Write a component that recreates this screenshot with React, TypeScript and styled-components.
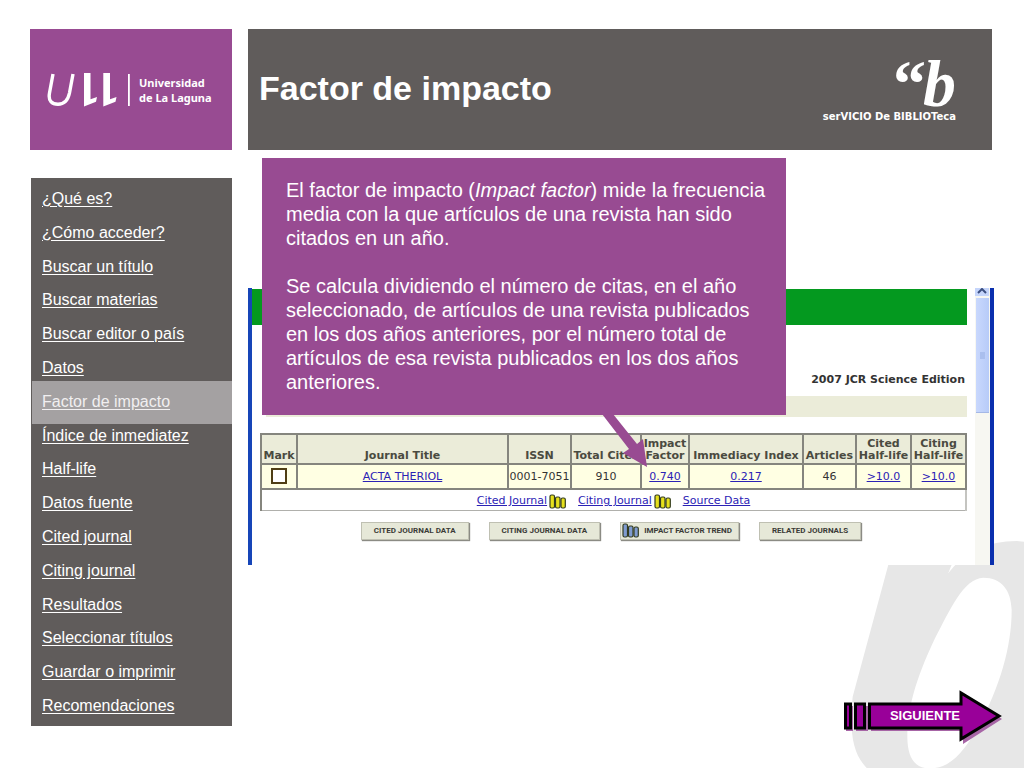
import React from "react";
import styled, { createGlobalStyle } from "styled-components";

const GlobalStyle = createGlobalStyle`
  * { box-sizing: border-box; }
  body { margin: 0; background: #fff; font-family: "Liberation Sans", Arial, sans-serif; }
`;

const purple = "#984b92";
const gray = "#605c5b";
const verdana = `"DejaVu Sans", Verdana, sans-serif`;

const Page = styled.div`
  position: relative;
  min-height: 100vh;
  padding: 29px 32px 0 30px;
  display: grid;
  grid-template-columns: 202px minmax(0, 1fr);
  grid-template-rows: auto 1fr;
  column-gap: 16px;
  overflow: hidden;
`;

const Watermark = styled.svg`
  position: absolute;
  right: 0;
  bottom: 0;
  width: 204px;
  height: 238px;
`;

const Brand = styled.div`
  display: flex;
  align-items: center;
  gap: 8px;
  padding-left: 17px;
  height: 121px;
  background: ${purple};
  color: #fff;
`;

const BrandName = styled.div`
  font: 700 11px/15px "Noto Sans", "Open Sans", sans-serif;
  white-space: nowrap;
`;

const Header = styled.header`
  display: flex;
  align-items: center;
  justify-content: space-between;
  padding: 0 36px 0 11px;
  background: ${gray};
  color: #fff;
`;

const Title = styled.h1`
  margin: 0;
  padding-bottom: 4px;
  font-size: 34px;
  line-height: 40px;
`;

const Library = styled.div`
  display: flex;
  flex-direction: column;
  align-items: flex-end;
`;

const LibraryMark = styled.div`
  display: flex;
  font-family: "Liberation Serif", serif;
  font-size: 66px;
  font-weight: 700;
  line-height: 54px;
`;

const LibraryQuote = styled.span`
  margin-right: -3px;
`;

const LibraryInitial = styled.span`
  font-style: italic;
`;

const LibraryName = styled.div`
  font: 700 10px/12px ${verdana};
`;

const Sidebar = styled.nav`
  align-self: start;
  min-height: 548px;
  margin: 28px 0 0 1px;
  padding: 4px 0 3px;
  display: grid;
  grid-auto-rows: 1fr;
  background: ${gray};
`;

const NavItem = styled.a<{ $active?: boolean }>`
  position: relative;
  display: flex;
  align-items: center;
  padding-left: 11px;
  font-size: 16px;
  line-height: 18px;
  text-underline-offset: 2px;
  color: ${(p) => (p.$active ? "#f1eff0" : "#fff")};
  z-index: ${(p) => (p.$active ? 0 : 1)};
  &::before {
    content: "";
    display: ${(p) => (p.$active ? "block" : "none")};
    position: absolute;
    inset: -4px 0 -5px 1px;
    background: #a4a1a2;
    z-index: -1;
  }
`;

const Main = styled.main`
  position: relative;
  display: flex;
  flex-direction: column;
`;

const Callout = styled.section`
  position: absolute;
  top: 8px;
  left: 14px;
  z-index: 2;
  width: 524px;
  padding: 20px 12px 21px 24px;
  background: ${purple};
  color: #fff;
  font-size: 20px;
  line-height: 24px;
  p { margin: 0; }
  p + p { margin-top: 24px; }
`;

const Pointer = styled.svg`
  position: absolute;
  left: 338px;
  top: 256px;
  width: 50px;
  height: 54px;
`;

const Capture = styled.section`
  display: flex;
  min-height: 277px;
  margin: 138px -2px 0 0;
  background: #fff;
  font-family: ${verdana};
  border-left: 4px solid #1645b8;
  border-right: 4px solid #0a2fae;
`;

const CaptureBody = styled.div`
  flex: 1;
  min-width: 0;
  padding: 1px 8px 0 0;
`;

const GreenBar = styled.div`
  height: 36px;
  background: #04991f;
`;

const Edition = styled.div`
  margin: 47px 2px 9px 0;
  font-size: 11px;
  line-height: 15px;
  font-weight: 700;
  text-align: right;
  color: #333;
`;

const BeigeBar = styled.div`
  height: 21px;
  margin-left: 14px;
  background: #ebecd9;
`;

const Table = styled.table`
  width: calc(100% - 8px);
  margin: 16px 0 0 8px;
  table-layout: fixed;
  border-collapse: collapse;
  font-size: 11px;
  line-height: 12px;
  color: #333;
  border: 2px solid #85857e;
  border-right-color: #c4c4c0;
  border-bottom: 1px solid #b0b0ac;
`;

const Col = styled.col<{ $w?: number }>`
  width: ${(p) => (p.$w ? p.$w + "px" : "auto")};
`;

const Th = styled.th`
  height: 30px;
  padding: 0 0 1px;
  vertical-align: bottom;
  white-space: nowrap;
  background: #ebecd9;
  border: 2px solid #85857e;
  color: #4a4a40;
`;

const Td = styled.td`
  height: 25px;
  padding: 0;
  text-align: center;
  background: #ffffe3;
  border: 2px solid #85857e;
`;

const LinksCell = styled.td`
  height: 21px;
  padding: 3px 0 0;
  border-top: 2px solid #85857e;
`;

const LinkRow = styled.div`
  display: flex;
  justify-content: center;
  align-items: center;
  gap: 12px;
`;

const LinkGroup = styled.span`
  display: flex;
  align-items: center;
  gap: 2px;
`;

const DataLink = styled.a`
  color: #2b22b5;
`;

const Mark = styled.input`
  appearance: none;
  display: block;
  width: 16px;
  height: 16px;
  margin: 0 auto 2px;
  border: 2px solid #4f3d14;
  background: #fff;
`;

const Actions = styled.div`
  display: flex;
  justify-content: center;
  gap: 20px;
  margin: 11px 0 0 3px;
`;

const Action = styled.button`
  display: flex;
  align-items: center;
  justify-content: center;
  gap: 5px;
  height: 18px;
  padding: 0 12px;
  border: 1px solid #bfc0b2;
  background: #e6e8d8;
  box-shadow: 1px 1px 1px #8b8b84;
  color: #3b3b37;
  font: 700 8px/12px Roboto, sans-serif;
  white-space: nowrap;
`;

const TrendAction = styled(Action)`
  padding: 0 6px 0 1px;
`;

const Scrollbar = styled.div`
  width: 15px;
  background: #f7f7f2;
`;

const ScrollUp = styled.svg`
  display: block;
  width: 14px;
  height: 8px;
  background: #c5d5fb;
`;

const Thumb = styled.div`
  display: flex;
  align-items: center;
  justify-content: center;
  width: 13px;
  height: 115px;
  margin: 2px 0 0 1px;
  background: linear-gradient(90deg, #c9d8fd, #b7cbf8);
  border-bottom: 1px solid #a5b8e6;
`;

const Grip = styled.span`
  width: 5px;
  height: 7px;
  background: #aabfee;
`;

const Next = styled.button`
  position: relative;
  align-self: flex-end;
  width: 160px;
  height: 54px;
  margin: 125px -11px 0 0;
  padding: 0 0 3px 4px;
  border: 0;
  background: none;
  color: #fff;
  font: 700 13px/16px "Liberation Sans", Arial, sans-serif;
`;

const NextShape = styled.svg`
  position: absolute;
  inset: 0;
  width: 160px;
  height: 54px;
`;

const NextLabel = styled.span`
  position: relative;
`;

const Bars = ({ fill }: { fill: string }) => (
  <svg width="17" height="15" viewBox="0 0 17 15" fill={fill} stroke="#333c20" strokeWidth="1.2">
    <rect x="1" y="1" width="4.500" height="13" rx="1.5" />
    <rect x="6.5" y="3" width="4.500" height="11" rx="1.5" />
    <rect x="12" y="4" width="4.300" height="10" rx="1.5" />
  </svg>
);

const sections = [
  "¿Qué es?", "¿Cómo acceder?", "Buscar un título", "Buscar materias",
  "Buscar editor o país", "Datos", "Factor de impacto", "Índice de inmediatez",
  "Half-life", "Datos fuente", "Cited journal", "Citing journal", "Resultados",
  "Seleccionar títulos", "Guardar o imprimir", "Recomendaciones",
];

export default function App() {
  return (
    <Page>
      <GlobalStyle />
      <Watermark viewBox="0 0 612 714" aria-hidden="true">
        <path
          fill="#e7e7e7"
          fillRule="evenodd"
          d="M205 104 L395 104 L385 129 Q460 33 590 33 L612 35 V714 H140 C98 670 88 610 98 500 Z M490 143 C430 145 390 240 345 325 C300 420 262 520 262 620 C262 675 280 708 315 714 H345 C400 708 440 650 475 590 C540 470 575 350 575 240 C573 180 545 143 490 143 Z"
        />
      </Watermark>

      <Brand>
        <svg width="84" height="34" viewBox="0 0 84 34" fill="#fff">
          <path d="M6 1 L2.500 20 C1 28 5 31.300 11 31.300 C18 31.300 21 27 22.500 20 L26 1" fill="none" stroke="#fff" strokeWidth="3.400" />
          <path d="M37 0 H43.500 V26.300 L50 24 L49 28.700 L37 33.500 Z" />
          <path d="M56.300 0 H63 V26.300 L69.500 24 L68.500 28.700 L56.300 33.500 Z" />
          <rect x="81" y="1" width="1.800" height="32" />
        </svg>
        <BrandName>Universidad<br />de La Laguna</BrandName>
      </Brand>

      <Header>
        <Title>Factor de impacto</Title>
        <Library>
          <LibraryMark>
            <LibraryQuote>“</LibraryQuote>
            <LibraryInitial>b</LibraryInitial>
          </LibraryMark>
          <LibraryName>serVICIO De BIBLIOTeca</LibraryName>
        </Library>
      </Header>

      <Sidebar>
        {sections.map((s) => (
          <NavItem key={s} href="#" $active={s === "Factor de impacto"}>{s}</NavItem>
        ))}
      </Sidebar>

      <Main>
        <Callout>
          <p>
            El factor de impacto (<i>Impact factor</i>) mide la frecuencia media con la que
            artículos de una revista han sido citados en un año.
          </p>
          <p>
            Se calcula dividiendo el número de citas, en el año seleccionado, de artículos de una
            revista publicados en los dos años anteriores, por el número total de artículos de esa
            revista publicados en los dos años anteriores.
          </p>
          <Pointer viewBox="0 0 50 54" fill={purple} aria-hidden="true">
            <path d="M2 0 H13 L37 30 L43 25 L47 53 L23 39 L29 35 Z" />
          </Pointer>
        </Callout>

        <Capture>
          <CaptureBody>
            <GreenBar />
            <Edition>2007 JCR Science Edition</Edition>
            <BeigeBar />
            <Table>
              <colgroup>
                <Col $w={36} /><Col /><Col $w={63} /><Col $w={70} /><Col $w={48} />
                <Col $w={114} /><Col $w={53} /><Col $w={55} /><Col $w={55} />
              </colgroup>
              <thead>
                <tr>
                  <Th>Mark</Th>
                  <Th>Journal Title</Th>
                  <Th>ISSN</Th>
                  <Th>Total Cites</Th>
                  <Th>Impact<br />Factor</Th>
                  <Th>Immediacy Index</Th>
                  <Th>Articles</Th>
                  <Th>Cited<br />Half-life</Th>
                  <Th>Citing<br />Half-life</Th>
                </tr>
              </thead>
              <tbody>
                <tr>
                  <Td><Mark type="checkbox" aria-label="Mark ACTA THERIOL" /></Td>
                  <Td><DataLink href="#">ACTA THERIOL</DataLink></Td>
                  <Td>0001-7051</Td>
                  <Td>910</Td>
                  <Td><DataLink href="#">0.740</DataLink></Td>
                  <Td><DataLink href="#">0.217</DataLink></Td>
                  <Td>46</Td>
                  <Td><DataLink href="#">&gt;10.0</DataLink></Td>
                  <Td><DataLink href="#">&gt;10.0</DataLink></Td>
                </tr>
                <tr>
                  <LinksCell colSpan={9}>
                    <LinkRow>
                      <LinkGroup><DataLink href="#">Cited Journal</DataLink><Bars fill="#e6e01c" /></LinkGroup>
                      <LinkGroup><DataLink href="#">Citing Journal</DataLink><Bars fill="#e6e01c" /></LinkGroup>
                      <DataLink href="#">Source Data</DataLink>
                    </LinkRow>
                  </LinksCell>
                </tr>
              </tbody>
            </Table>
            <Actions>
              <Action>CITED JOURNAL DATA</Action>
              <Action>CITING JOURNAL DATA</Action>
              <TrendAction><Bars fill="#7f9bd0" />IMPACT FACTOR TREND</TrendAction>
              <Action>RELATED JOURNALS</Action>
            </Actions>
          </CaptureBody>
          <Scrollbar>
            <ScrollUp viewBox="0 0 14 8"><path d="M3 5 L7 1 L11 5" fill="none" stroke="#3c4f80" strokeWidth="2" /></ScrollUp>
            <Thumb><Grip /></Thumb>
          </Scrollbar>
        </Capture>

        <Next>
          <NextShape viewBox="0 0 160 54" aria-hidden="true">
            <path d="M3 16 h7 v25 h-7 Z M13 16 h12 v25 h-12 Z M28 16 H120 V3 L159 29 L120 54 V41 H28 Z" fill="#a765a6" />
            <g fill="#990099" stroke="#000" strokeWidth="3">
              <rect x="2.500" y="14" width="5" height="24" />
              <rect x="12.500" y="14" width="9" height="24" />
              <path d="M26.500 14 H118 V3 L156 26 L118 49 V38 H26.500 Z" />
            </g>
          </NextShape>
          <NextLabel>SIGUIENTE</NextLabel>
        </Next>
      </Main>
    </Page>
  );
}
